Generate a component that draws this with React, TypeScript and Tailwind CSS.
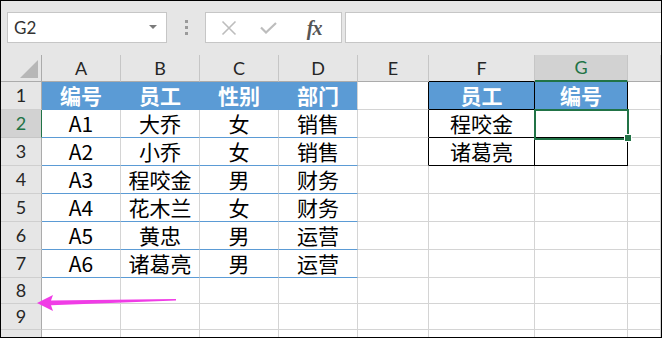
import React from "react";

const W = [
  "w-[41px]",
  "w-[79px]",
  "w-[79px]",
  "w-[79px]",
  "w-[79px]",
  "w-[71px]",
  "w-[106px]",
  "w-[93px]",
  "w-[33px]",
];

const cjk = "font-['Noto_Sans_CJK_SC','Noto_Sans',sans-serif]";

type Cell = { t?: string; c: string };

const GRID = "border-r-[#d4d4d4] border-b-[#d4d4d4] bg-white";
const BLUEHEAD = "border-r-[#5b9bd5] border-b-[#5b9bd5] bg-[#5b9bd5] text-white font-bold";
const BLUEHEAD_END = "border-r-[#d4d4d4] border-b-[#5b9bd5] bg-[#5b9bd5] text-white font-bold";
const DATA = "border-r-[#d4d4d4] border-b-[#5b9bd5] bg-white text-black";
const E_EDGE = "border-r-black border-b-[#d4d4d4] bg-white";
const FG_HEAD = "border-r-black border-b-black bg-[#5b9bd5] text-white font-bold";
const FG_DATA = "border-r-black border-b-black bg-white text-black";

const data = [
  ["A1", "大乔", "女", "销售", "程咬金"],
  ["A2", "小乔", "女", "销售", "诸葛亮"],
  ["A3", "程咬金", "男", "财务"],
  ["A4", "花木兰", "女", "财务"],
  ["A5", "黄忠", "男", "运营"],
  ["A6", "诸葛亮", "男", "运营"],
];

function RowHead({ n, h, selected }: { n: string; h: string; selected?: boolean }) {
  return (
    <div
      className={`${W[0]} shrink-0 ${h} flex items-center justify-center border-b border-r text-[18px] font-['Lato',sans-serif] ${
        selected
          ? "bg-[#d2d2d2] border-r-[#217346] border-b-[#c6c6c6] text-[#217346]"
          : "bg-[#e6e6e6] border-r-[#ababab] border-b-[#cfcfcf] text-[#262626]"
      }`}
    >
      {n}
    </div>
  );
}

function DataRow({ n, h, cells, selected }: { n: string; h: string; cells: Cell[]; selected?: boolean }) {
  return (
    <div className={`flex ${h}`}>
      <RowHead n={n} h={h} selected={selected} />
      {cells.map((cell, i) => (
        <div
          key={i}
          className={`${W[i + 1]} shrink-0 h-full flex items-center justify-center border-r border-b text-[21px] leading-none ${cjk} ${cell.c}`}
        >
          {cell.t ?? ""}
        </div>
      ))}
    </div>
  );
}

export default function App() {
  const letters = ["A", "B", "C", "D", "E", "F", "G", ""];

  const rows: { n: string; h: string; cells: Cell[]; sel?: boolean }[] = [];
  rows.push({
    n: "1",
    h: "h-[28px]",
    cells: [
      { t: "编号", c: BLUEHEAD },
      { t: "员工", c: BLUEHEAD },
      { t: "性别", c: BLUEHEAD },
      { t: "部门", c: BLUEHEAD_END },
      { c: E_EDGE },
      { t: "员工", c: FG_HEAD },
      { t: "编号", c: FG_HEAD },
      { c: GRID },
    ],
  });
  data.forEach((d, i) => {
    const r = i + 2;
    const cells: Cell[] = [
      { t: d[0], c: DATA },
      { t: d[1], c: DATA },
      { t: d[2], c: DATA },
      { t: d[3], c: DATA },
    ];
    if (r <= 3) {
      cells.push({ c: E_EDGE });
      cells.push({ t: d[4], c: FG_DATA });
      cells.push({ c: FG_DATA });
    } else {
      cells.push({ c: GRID });
      cells.push({ c: GRID });
      cells.push({ c: GRID });
    }
    cells.push({ c: GRID });
    rows.push({ n: String(r), h: "h-[28px]", cells, sel: r === 2 });
  });
  const blank = (): Cell[] => Array.from({ length: 8 }, () => ({ c: GRID }));
  rows.push({ n: "8", h: "h-[26px]", cells: blank() });
  rows.push({ n: "9", h: "h-[26px]", cells: blank() });
  rows.push({ n: "", h: "h-[26px]", cells: blank() });

  return (
    <div className="relative w-[662px] h-[338px] border border-black bg-[#e6e6e6] overflow-hidden font-['Lato',sans-serif]">
      {/* Formula bar */}
      <div className="h-[54px] flex items-start pt-[11px] pl-[6px]">
        <div className="w-[160px] h-[31px] bg-white border border-[#c6c6c6] flex items-center justify-between pl-[6px] pr-[9px]">
          <span className="text-[17px] text-[#333] font-['Lato',sans-serif]">G2</span>
          <svg width="8" height="5" viewBox="0 0 8 5">
            <path d="M0 0 L8 0 L4 4 Z" fill="#7a7a7a" />
          </svg>
        </div>
        <div className="w-[38px] h-[31px] flex flex-col items-center justify-center gap-[3px]">
          <div className="w-[3px] h-[3px] bg-[#9a9a9a]" />
          <div className="w-[3px] h-[3px] bg-[#9a9a9a]" />
          <div className="w-[3px] h-[3px] bg-[#9a9a9a]" />
        </div>
        <div className="w-[137px] h-[31px] bg-white border border-[#c6c6c6] flex items-center">
          <div className="w-[44px] flex justify-center pl-[2px]">
            <svg width="16" height="16" viewBox="0 0 16 16">
              <path d="M1.5 1.5 L14.5 14.5 M14.5 1.5 L1.5 14.5" stroke="#bdbdbd" strokeWidth="1.6" fill="none" />
            </svg>
          </div>
          <div className="w-[38px] flex justify-center">
            <svg width="17" height="12" viewBox="0 0 17 12">
              <path d="M1 5.5 L6 10.5 L16 1" stroke="#bdbdbd" strokeWidth="2.2" fill="none" />
            </svg>
          </div>
          <div className="w-[54px] flex justify-center">
            <span className="text-[20px] italic font-bold text-[#555] font-['Liberation_Serif',serif] leading-none tracking-[-1px]">
              fx
            </span>
          </div>
        </div>
        <div className="flex-1 ml-[3px] h-[31px] bg-white border border-[#c6c6c6] border-r-0" />
      </div>

      {/* Column headers */}
      <div className="flex h-[27px]">
        <div className={`${W[0]} shrink-0 h-full relative border-r border-b border-r-[#ababab] border-b-[#ababab] bg-[#e6e6e6]`}>
          <svg className="absolute left-[19px] top-[5px]" width="18" height="18" viewBox="0 0 18 18">
            <path d="M18 0 L18 18 L0 18 Z" fill="#b7b7b7" />
          </svg>
        </div>
        {letters.map((l, i) => {
          const isG = l === "G";
          const isF = l === "F";
          return (
            <div
              key={i}
              className={`${W[i + 1]} shrink-0 h-full flex items-center justify-center border-r text-[18px] ${
                isG
                  ? "bg-[#d2d2d2] border-r-[#c6c6c6] border-b-2 border-b-[#217346] text-[#217346]"
                  : isF
                  ? "bg-[#e6e6e6] border-r-[#c6c6c6] border-b border-b-black text-[#262626]"
                  : "bg-[#e6e6e6] border-r-[#c6c6c6] border-b border-b-[#ababab] text-[#262626]"
              }`}
            >
              {l}
            </div>
          );
        })}
      </div>

      {rows.map((r, i) => (
        <DataRow key={i} n={r.n} h={r.h} cells={r.cells} selected={r.sel} />
      ))}

      {/* Selection of G2 */}
      <div className="absolute left-[533px] top-[108px] w-[95px] h-[31px] border-2 border-[#217346]" />
      <div className="absolute left-[624px] top-[134px] w-[6px] h-[6px] bg-[#217346] outline outline-1 outline-white" />

      {/* Arrow */}
      <svg className="absolute -left-px -top-px" width="662" height="338" viewBox="0 0 662 338">
        <polygon
          points="37,303 53,295 51,300.5 176,299 176,300.6 51,305.3 53,311"
          fill="#f03ce6"
        />
      </svg>
    </div>
  );
}
